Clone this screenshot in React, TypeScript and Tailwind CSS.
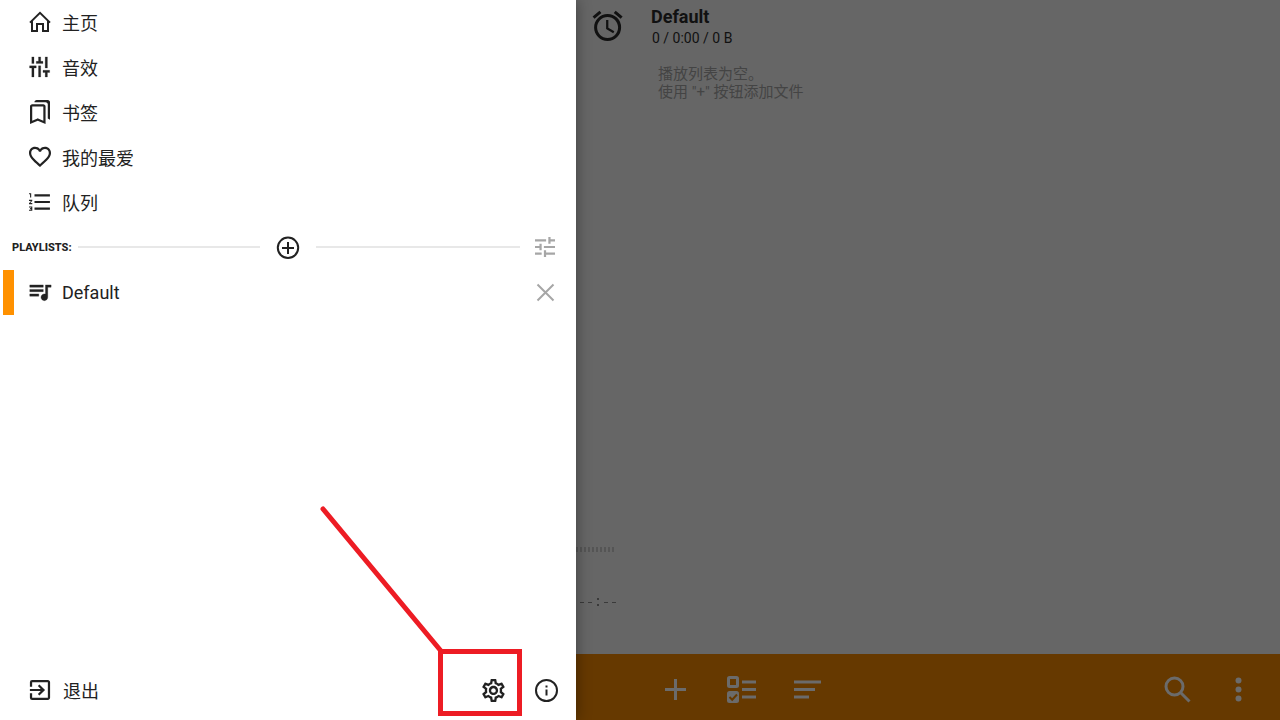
import type { ReactNode } from "react";
import {
  MdAccessAlarm,
  MdExitToApp,
  MdFavoriteBorder,
  MdFormatListNumbered,
  MdOutlineBookmarks,
  MdOutlineSettings,
  MdQueueMusic,
  MdTune,
} from "react-icons/md";

const icon = "size-6 shrink-0";

function HomeIcon() {
  return (
    <svg className={icon} viewBox="0 0 24 24" fill="none" stroke="currentColor" strokeWidth="2" aria-hidden="true">
      <path d="M2 12.6 12 2.8l10 9.800M4 11v10h5v-7h6v7h5V11" />
    </svg>
  );
}

const links: { label: string; icon: ReactNode }[] = [
  { label: "主页", icon: <HomeIcon /> },
  { label: "音效", icon: <MdTune viewBox="1.3 0.9 21.500 21.500" strokeWidth="0.2" className="size-6 shrink-0 rotate-90" /> },
  { label: "书签", icon: <MdOutlineBookmarks viewBox="1.2 1 21.6 22" preserveAspectRatio="none" className={icon} /> },
  { label: "我的最爱", icon: <MdFavoriteBorder viewBox="1.1 1.3 21.8 21.8" className={icon} /> },
  { label: "队列", icon: <MdFormatListNumbered viewBox="1.1 1.1 21.8 21.8" className={icon} /> },
];

function Drawer() {
  return (
    <aside className="relative z-10 flex w-[45%] shrink-0 flex-col bg-white text-[18px] text-[#222222] shadow-[0_0_14px_rgba(0,0,0,0.4)]">
      <nav aria-label="菜单">
        {links.map((l) => (
          <a key={l.label} href="#" className="flex h-[45px] items-start gap-[10px] pt-[10px] pl-7 leading-7">
            {l.icon}
            {l.label}
          </a>
        ))}
      </nav>

      <div className="flex h-[45px] items-start pr-[19px] pl-3 pt-[10px]">
        <h2 className="w-[66px] text-[11px] leading-[26px] font-extrabold">PLAYLISTS:</h2>
        <div className="mt-[11px] h-[2px] flex-1 bg-[#e8e8e8]" />
        <button type="button" aria-label="添加播放列表" className="mx-4">
          <svg className={icon} viewBox="0 0 24 24" fill="none" stroke="currentColor" strokeWidth="2">
            <circle cx="12" cy="12.800" r="10.200" />
            <path d="M12 7v12M6 13h12" />
          </svg>
        </button>
        <div className="mt-[11px] h-[2px] w-[204px] bg-[#e8e8e8]" />
        <button type="button" aria-label="选项" className="ml-[13px] text-[#a6a6a6]">
          <MdTune viewBox="1.2 1.2 21.6 21.6" className={icon} />
        </button>
      </div>

      <div className="flex h-[45px] items-start pr-[19px] pl-[3px]">
        <span className="h-full w-[11px] bg-[#ff9100]" />
        <a href="#" className="flex flex-1 gap-[10px] pt-[10px] pl-[14px] leading-[26px]">
          <MdQueueMusic viewBox="1.4 1.6 21.4 21.4" strokeWidth="0.3" className={icon} />
          Default
        </a>
        <button type="button" aria-label="删除" className="mt-[10px] text-[#a6a6a6]">
          <svg className={icon} viewBox="0 0 24 24" fill="none" stroke="currentColor" strokeWidth="2">
            <path d="m4.5 4.5 16 16m0-16-16 16" />
          </svg>
        </button>
      </div>

      <div className="mt-auto flex items-start pr-[18px] pb-[14px] pl-7">
        <button type="button" className="flex flex-1 gap-[11px] leading-7">
          <MdExitToApp viewBox="1.3 1.3 21.4 21.4" className={icon} />
          退出
        </button>
        <button type="button" aria-label="设置" className="relative">
          <MdOutlineSettings viewBox="1.2 1.200 20.8 20.8" className={icon} />
          <svg className="pointer-events-none absolute -top-[172px] -left-[162px] h-[214px] w-[206px] max-w-none" viewBox="319 506 206 214" fill="none" stroke="#ed1c24" strokeWidth="5" aria-hidden="true">
            <path d="m323 509 118 142" strokeLinecap="round" />
            <path d="M440.500 651.500h79v62h-79z" />
          </svg>
        </button>
        <button type="button" aria-label="关于" className="ml-[29px]">
          <svg className={icon} viewBox="0 0 24 24" fill="none" stroke="currentColor" strokeWidth="2">
            <circle cx="12.500" cy="12.500" r="10.500" />
            <path d="M12.500 11.500v6M12.500 7.500v2" />
          </svg>
        </button>
      </div>
    </aside>
  );
}

function Player() {
  return (
    <main className="flex min-w-0 flex-1 flex-col bg-[#666666] text-[#111111]">
      <header className="flex pt-[7px] pl-[13px]">
        <button type="button" aria-label="定时器" className="h-9">
          <MdAccessAlarm viewBox="-0.4 -0.600 24 24" className="size-9" />
        </button>
        <div className="pl-[26px]">
          <h1 className="text-[18px] leading-5 font-bold">Default</h1>
          <p className="pl-px text-[14px] leading-[22px]">0 / 0:00 / 0 B</p>
          <p className="pt-4 pl-[7px] text-[15px] leading-[18px] text-[#444444]">
            播放列表为空。
            <br />
            使用 "+" 按钮添加文件
          </p>
        </div>
      </header>

      <div className="mt-auto pb-[47px]">
        <svg className="h-[60px] w-[42px]" viewBox="0 0 42 60" aria-hidden="true">
          <path d="M0 2.500h39" stroke="#555555" strokeWidth="5" strokeDasharray="2 2" />
          <path d="M4 55.500h4m4 0h4m12 0h4m4 0h4" stroke="#3a3a3a" strokeWidth="1" />
          <path d="M21 51h2v2h-2zM21 57h2v2h-2z" fill="#3a3a3a" />
        </svg>
      </div>

      <footer className="flex h-[66px] items-start bg-[#663900] pt-[19px] pr-[26px] pl-[83px] text-[#6b6b6b]">
        <button type="button" aria-label="添加">
          <svg className="size-8" viewBox="0 0 32 32" fill="none" stroke="currentColor" strokeWidth="3">
            <path d="M16.500 6v21M6 16.500h21" />
          </svg>
        </button>
        <button type="button" aria-label="选择" className="ml-[34px]">
          <svg className="size-8" viewBox="0 0 32 32" fill="none" stroke="currentColor" strokeWidth="3">
            <rect x="3.500" y="4.500" width="9" height="9" rx="1" />
            <rect x="2" y="18" width="12" height="12" rx="2.500" fill="currentColor" stroke="none" />
            <path d="m4.500 24 2.700 2.700 4.800-5.200" stroke="#663900" strokeWidth="2" />
            <path d="M17 9h14M17 16.500h14M17 24h14" />
          </svg>
        </button>
        <button type="button" aria-label="排序" className="ml-[34px]">
          <svg className="size-8" viewBox="0 0 32 32" fill="none" stroke="currentColor" strokeWidth="3">
            <path d="M3 9h27M3 16.500h21M3 24h15" />
          </svg>
        </button>
        <button type="button" aria-label="搜索" className="ml-auto">
          <svg className="size-8" viewBox="0 0 32 32" fill="none" stroke="currentColor" strokeWidth="3">
            <circle cx="13.500" cy="13.500" r="8.500" />
            <path d="m20 20 8.500 8.500" />
          </svg>
        </button>
        <button type="button" aria-label="更多" className="ml-[29px]">
          <svg className="size-8" viewBox="0 0 32 32" fill="currentColor">
            <circle cx="16.500" cy="7.500" r="3" />
            <circle cx="16.500" cy="16.500" r="3" />
            <circle cx="16.500" cy="25.500" r="3" />
          </svg>
        </button>
      </footer>
    </main>
  );
}

export default function App() {
  return (
    <div className="flex min-h-screen overflow-hidden font-['Roboto','Noto_Sans_CJK_SC',sans-serif]">
      <Drawer />
      <Player />
    </div>
  );
}
